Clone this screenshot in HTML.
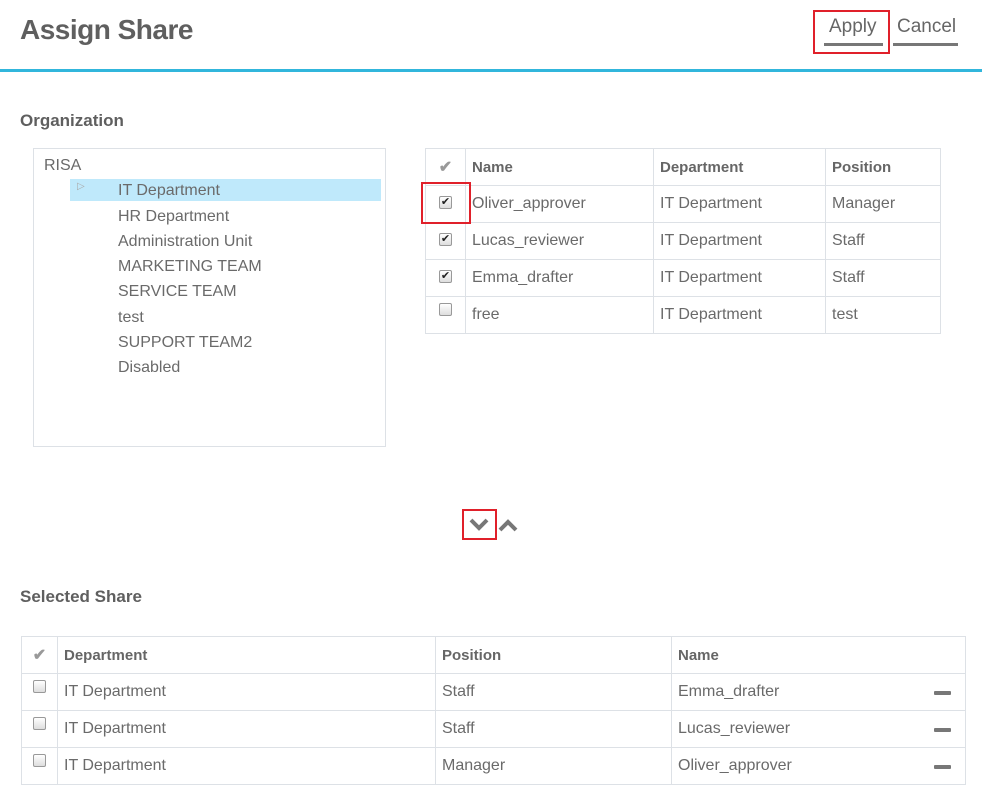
<!DOCTYPE html>
<html><head><style>
body{margin:0;width:982px;height:809px;background:#fff;font-family:"Liberation Sans",sans-serif;color:#6a6a6a;position:relative;overflow:hidden}
.a{position:absolute}
h1{position:absolute;left:20px;top:14px;margin:0;font-size:28px;font-weight:bold;color:#5f5f5f;letter-spacing:-0.5px}
.lbl{font-size:17px;font-weight:bold;color:#5f5f5f}
table{border-collapse:collapse;position:absolute;font-size:16px}
td{border:1px solid #dde1e6;padding:0 6px;height:36px;color:#6a6a6a}
th{border:1px solid #dde1e6;padding:0 6px;height:36px;text-align:left;font-size:15px;color:#666}
.cb{width:11px;height:11px;border:1px solid #999;border-radius:2px;background:linear-gradient(#fff,#ddd);display:inline-block;position:relative;top:-3px;font-size:11px;line-height:11px;text-align:center;color:#222}
.tree div{position:absolute;font-size:16px;color:#6a6a6a}
.red{position:absolute;border:2px solid #e0202a}
.minus{position:absolute;right:14px;top:17px;width:17px;height:4px;background:#777;border-radius:1px}
</style></head><body>
<h1>Assign Share</h1>
<div class="a" style="left:829px;top:16px;font-size:19px;color:#666">Apply</div>
<div class="a" style="left:824px;top:43px;width:59px;height:3px;background:#777"></div>
<div class="a" style="left:897px;top:16px;font-size:19px;color:#666">Cancel</div>
<div class="a" style="left:893px;top:43px;width:65px;height:3px;background:#777"></div>
<div class="red" style="left:813px;top:10px;width:73px;height:40px"></div>
<div class="a" style="left:0;top:69px;width:982px;height:3px;background:#31b6dc"></div>

<div class="a lbl" style="left:20px;top:111px">Organization</div>
<div class="a" style="left:33px;top:148px;width:351px;height:297px;border:1px solid #dde1e6"></div>
<div class="a" style="left:70px;top:179px;width:311px;height:22px;background:#bfe9fb"></div>
<div class="tree">
<div style="left:44px;top:157px">RISA</div>
<div style="left:77px;top:181px;font-size:10px;color:#aaa">▷</div>
<div style="left:118px;top:182px">IT Department</div>
<div style="left:118px;top:208px">HR Department</div>
<div style="left:118px;top:233px">Administration Unit</div>
<div style="left:118px;top:258px">MARKETING TEAM</div>
<div style="left:118px;top:283px">SERVICE TEAM</div>
<div style="left:118px;top:309px">test</div>
<div style="left:118px;top:334px">SUPPORT TEAM2</div>
<div style="left:118px;top:359px">Disabled</div>
</div>

<table style="left:425px;top:148px;width:516px">
<tr><th style="width:27px;text-align:center;color:#999;font-size:16px">✔</th><th style="width:175px">Name</th><th style="width:159px">Department</th><th>Position</th></tr>
<tr><td style="text-align:center"><span class="cb">✔</span></td><td>Oliver_approver</td><td>IT Department</td><td>Manager</td></tr>
<tr><td style="text-align:center"><span class="cb">✔</span></td><td>Lucas_reviewer</td><td>IT Department</td><td>Staff</td></tr>
<tr><td style="text-align:center"><span class="cb">✔</span></td><td>Emma_drafter</td><td>IT Department</td><td>Staff</td></tr>
<tr><td style="text-align:center"><span class="cb"></span></td><td>free</td><td>IT Department</td><td>test</td></tr>
</table>
<div class="red" style="left:421px;top:182px;width:46px;height:38px"></div>

<svg class="a" style="left:462px;top:510px" width="60" height="28">
<polyline points="9,10 17,18 25,10" fill="none" stroke="#777" stroke-width="4"/>
<polyline points="38,20 46,12 54,20" fill="none" stroke="#777" stroke-width="4"/>
</svg>
<div class="red" style="left:462px;top:509px;width:31px;height:27px"></div>

<div class="a lbl" style="left:20px;top:587px">Selected Share</div>
<table style="left:21px;top:636px;width:945px">
<tr><th style="width:23px;text-align:center;color:#999;font-size:16px">✔</th><th style="width:365px">Department</th><th style="width:223px">Position</th><th>Name</th></tr>
<tr><td style="text-align:center"><span class="cb"></span></td><td>IT Department</td><td>Staff</td><td style="position:relative">Emma_drafter<div class="minus"></div></td></tr>
<tr><td style="text-align:center"><span class="cb"></span></td><td>IT Department</td><td>Staff</td><td style="position:relative">Lucas_reviewer<div class="minus"></div></td></tr>
<tr><td style="text-align:center"><span class="cb"></span></td><td>IT Department</td><td>Manager</td><td style="position:relative">Oliver_approver<div class="minus"></div></td></tr>
</table>
</body></html>
